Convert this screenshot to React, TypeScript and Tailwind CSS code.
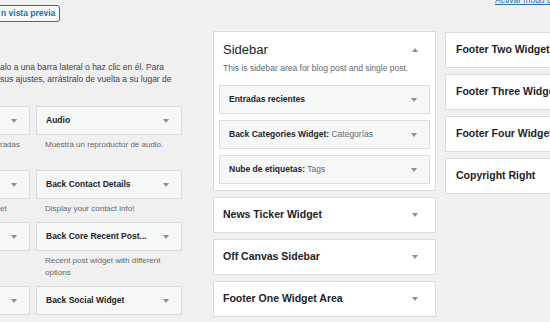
type CaretProps = { up?: boolean }

function Caret({ up = false }: CaretProps) {
  return (
    <svg width="6" height="4" viewBox="0 0 6 4" className="shrink-0">
      <path d={up ? 'M0 4 L3 0 L6 4 Z' : 'M0 0 L6 0 L3 4 Z'} fill="#8c8f94" />
    </svg>
  )
}

type Available = { title: string; desc: string[]; first?: boolean }

function AvailableWidget({ title, desc, first }: Available) {
  return (
    <div>
      <div
        className={`h-[29px] flex items-center justify-between border border-[#dcdcde] bg-[#f6f7f7] pr-[12px] ${
          first ? 'pl-[1px]' : 'pl-[9px]'
        }`}
      >
        <span className="text-[8.5px] font-bold whitespace-nowrap">{title}</span>
        <Caret />
      </div>
      {desc.length > 0 && (
        <p
          className={`mt-[4px] text-[8px] leading-[12px] text-[#646970] whitespace-nowrap ${
            first ? 'pl-[1px]' : 'px-[9px]'
          }`}
        >
          {desc.map((line, i) => (
            <span key={i} className="block">
              {line || '\u00a0'}
            </span>
          ))}
        </p>
      )}
    </div>
  )
}

export default function App() {
  const available: Available[] = [
    { title: '', desc: ['radas', ''], first: true },
    { title: 'Audio', desc: ['Muestra un reproductor de audio.'] },
    { title: '', desc: ['et'], first: true },
    { title: 'Back Contact Details', desc: ['Display your contact info!'] },
    { title: '', desc: [], first: true },
    { title: 'Back Core Recent Post...', desc: ['Recent post widget with different', 'options'] },
    { title: '', desc: [], first: true },
    { title: 'Back Social Widget', desc: [] },
  ]

  const sidebarWidgets = [
    { name: 'Entradas recientes', value: '' },
    { name: 'Back Categories Widget:', value: 'Categorías' },
    { name: 'Nube de etiquetas:', value: 'Tags' },
  ]

  const closedSidebars = ['News Ticker Widget', 'Off Canvas Sidebar', 'Footer One Widget Area']
  const rightSidebars = ['Footer Two Widget Area', 'Footer Three Widget Area', 'Footer Four Widget Area', 'Copyright Right']

  return (
    <div className="w-[550px] h-[322px] overflow-hidden bg-[#f0f0f1] text-[#1d2327] font-['Liberation_Sans',Arial,sans-serif] flex items-start">
      {/* Available widgets */}
      <section className="w-[182px] shrink-0 pt-[5px]">
        <button className="-ml-[3px] h-[17px] flex items-center pl-[3px] pr-[4px] rounded-[3px] border border-[#2271b1] bg-[#f6f7f7] text-[#2271b1] text-[8.5px] font-bold leading-none">
          n vista previa
        </button>
        <div className="mt-[39px] text-[8.5px] leading-[12px] text-[#3c434a] whitespace-nowrap">
          <p>alo a una barra lateral o haz clic en él. Para</p>
          <p>sus ajustes, arrástralo de vuelta a su lugar de</p>
        </div>
        <div className="mt-[21px] -ml-px grid grid-cols-[31px_146px] gap-x-[6px] gap-y-[7px] items-start">
          {available.map((w, i) => (
            <AvailableWidget key={i} {...w} />
          ))}
        </div>
      </section>

      {/* Sidebars, middle column */}
      <section className="ml-[31px] w-[223px] shrink-0 pt-[31px] flex flex-col gap-[6px]">
        <div className="border border-[#dcdcde] bg-white pb-[6px]">
          <div className="pt-[10px] pl-[9px] pr-[17px] flex items-center justify-between">
            <h2 className="text-[13px] leading-[15px]">Sidebar</h2>
            <Caret up />
          </div>
          <p className="mt-[5px] pl-[9px] text-[8.5px] leading-[12px] text-[#646970]">
            This is sidebar area for blog post and single post.
          </p>
          <div className="mt-[11px] px-[5px] flex flex-col gap-[6px]">
            {sidebarWidgets.map((w) => (
              <div
                key={w.name}
                className="h-[29px] flex items-center justify-between border border-[#dcdcde] bg-[#f6f7f7] pl-[9px] pr-[12px]"
              >
                <span className="text-[8.5px] whitespace-nowrap">
                  <span className="font-bold">{w.name}</span>
                  {w.value && <span className="text-[#646970]"> {w.value}</span>}
                </span>
                <Caret />
              </div>
            ))}
          </div>
        </div>
        {closedSidebars.map((name) => (
          <div
            key={name}
            className="h-[36px] flex items-center justify-between border border-[#dcdcde] bg-white pl-[9px] pr-[17px]"
          >
            <h2 className="text-[10.5px] font-bold whitespace-nowrap">{name}</h2>
            <Caret />
          </div>
        ))}
      </section>

      {/* Sidebars, right column */}
      <section className="ml-[9px] w-[220px] shrink-0">
        <div className="-mt-[5px] h-[37px] pl-[50px] leading-[10px]">
          <a href="#" className="block text-[8.5px] leading-[10px] text-[#2271b1] underline whitespace-nowrap">
            Activar modo de accesibilidad
          </a>
        </div>
        <div className="flex flex-col gap-[6px]">
          {rightSidebars.map((name) => (
            <div key={name} className="h-[36px] flex items-center border border-[#dcdcde] bg-white pl-[10px]">
              <h2 className="text-[10.5px] font-bold whitespace-nowrap">{name}</h2>
            </div>
          ))}
        </div>
      </section>
    </div>
  )
}
